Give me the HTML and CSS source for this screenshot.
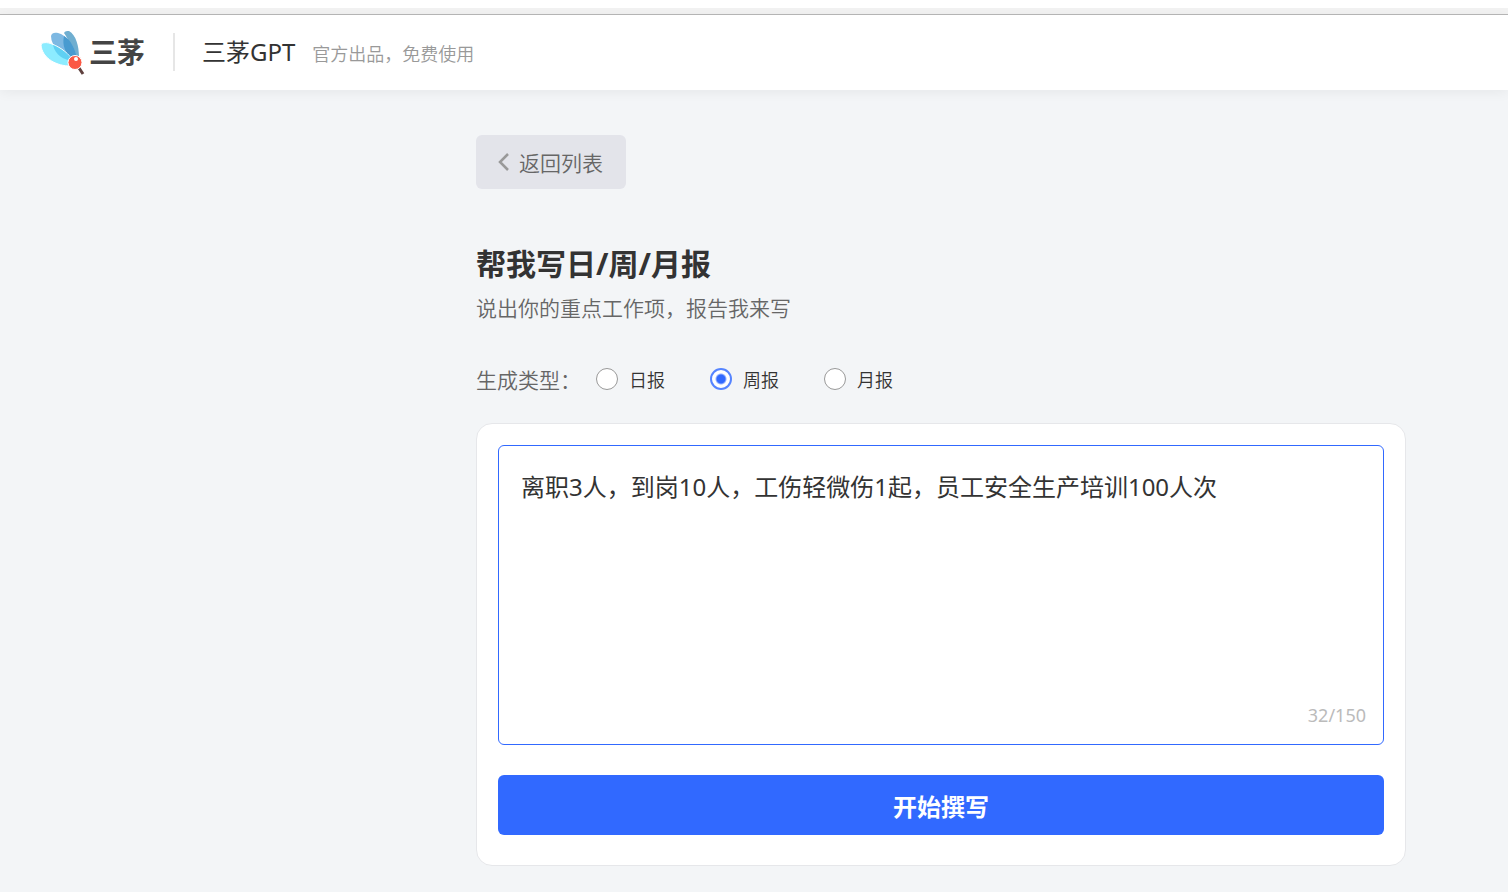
FILE: index.html
```html
<!DOCTYPE html>
<html lang="zh-CN">
<head>
<meta charset="utf-8">
<meta name="viewport" content="width=device-width, initial-scale=1">
<title>三茅GPT</title>
<link rel="stylesheet" href="styles.css">
</head>
<body>
<div class="top-strip"></div>
<header class="header">
  <a class="logo" href="#">
    <svg class="logo-mark" viewBox="0 0 48 48" aria-hidden="true">
      <path d="M24 5C25 3 27 3 29 3C36 7 39 18 39 29L34 29C32 18 28 11 24 5Z" fill="#6faed0"/>
      <path d="M11 8C12 4 16 4 21 6C30 11 35 20 37 30L31 32C22 26 11 19 11 8Z" fill="#7db8e2"/>
      <path d="M24 8C31 12 35 21 37 30L31 31C25 24 22 17 24 8Z" fill="#489bd0"/>
      <path d="M1 17C2 14 7 14 12 16C22 20 29 26 33 33L28 38C14 37 2 29 1 17Z" fill="#8cecff" stroke="#fff" stroke-width="1"/>
      <path d="M13 17C22 21 29 26 33 33C24 32 15 27 13 17Z" fill="#5fd0f3"/>
      <path d="M37 37L43 46" stroke="#5f403e" stroke-width="3"/>
      <circle cx="35" cy="34.500" r="7" fill="#fb5844" stroke="#fff" stroke-width="1"/>
      <circle cx="36" cy="31" r="2" fill="#fff"/>
    </svg>
    <span class="logo-text">三茅</span>
  </a>
  <span class="divider"></span>
  <span class="product">三茅GPT</span>
  <span class="slogan">官方出品，免费使用</span>
</header>
<main class="main">
  <button class="back" type="button">
    <svg class="back-icon" viewBox="0 0 12 20" aria-hidden="true"><path d="M10 1L2 9L10 17" fill="none" stroke="#999" stroke-width="2.5"/></svg>
    <span>返回列表</span>
  </button>
  <h1 class="title">帮我写日/周/月报</h1>
  <p class="subtitle">说出你的重点工作项，报告我来写</p>
  <form class="form">
    <div class="types" role="radiogroup" aria-labelledby="type-label">
      <span class="types-label" id="type-label">生成类型：</span>
      <label class="type"><input class="radio" type="radio" name="type">日报</label>
      <label class="type"><input class="radio" type="radio" name="type" checked>周报</label>
      <label class="type"><input class="radio" type="radio" name="type">月报</label>
    </div>
    <div class="card">
      <div class="field">
        <textarea class="input" maxlength="150" aria-label="重点工作项">离职3人，到岗10人，工伤轻微伤1起，员工安全生产培训100人次</textarea>
        <span class="counter">32/150</span>
      </div>
      <button class="submit" type="button">开始撰写</button>
    </div>
  </form>
</main>
</body>
</html>
```
FILE: styles.css
```css
* {
  box-sizing: border-box;
}

body {
  margin: 0;
  background: #f3f5f7;
  color: #333;
  font-family: "Noto Sans", "Noto Sans CJK SC", sans-serif;
}

button,
textarea {
  font-family: inherit;
}

.top-strip {
  height: 15px;
  border-top: 8px solid #fff;
  border-bottom: 1px solid #b8b8b8;
  background: #f2f2f2;
}

.header {
  display: flex;
  align-items: center;
  height: 75px;
  padding: 0 40px 2px;
  background: #fff;
  box-shadow: 0 2px 12px rgba(0, 0, 0, 0.06);
}

.logo {
  display: flex;
  align-items: center;
  gap: 1px;
  color: #444;
  text-decoration: none;
}

.logo-mark {
  width: 48px;
  height: 48px;
}

.logo-text {
  font-size: 28px;
  line-height: 40px;
  font-weight: 700;
}

.divider {
  width: 2px;
  height: 38px;
  margin: 0 27px 0 28px;
  background: #e6e6e6;
}

.product {
  font-size: 24px;
  line-height: 36px;
}

.slogan {
  margin: 4px 0 0 17px;
  color: #999;
  font-size: 18px;
  line-height: 28px;
  font-weight: 350;
}

.main {
  padding: 45px 102px 26px 476px;
}

.back {
  display: flex;
  align-items: center;
  gap: 9px;
  height: 54px;
  padding: 2px 23px 0 22px;
  border: 0;
  border-radius: 6px;
  background: #e3e4ea;
  color: #666;
  font-size: 21px;
  line-height: 32px;
  font-weight: 350;
}

.back-icon {
  width: 12px;
  height: 20px;
}

.title {
  margin: 53px 0 0;
  font-size: 30px;
  line-height: 44px;
  font-weight: 700;
}

.subtitle {
  margin: 6px 0 0;
  color: #666;
  font-size: 21px;
  line-height: 32px;
  font-weight: 350;
}

.types {
  display: flex;
  align-items: center;
  height: 32px;
  margin: 39px 0 28px;
}

.types-label {
  width: 120px;
  color: #666;
  font-size: 21px;
  font-weight: 350;
}

.type {
  display: flex;
  align-items: center;
  gap: 11px;
  margin-right: 45px;
  font-size: 18px;
  font-weight: 350;
}

.radio {
  appearance: none;
  width: 22px;
  height: 22px;
  margin: 0;
  border: 1px solid #999;
  border-radius: 50%;
  background: #fff;
}

.radio:checked {
  border: 2px solid #5584ff;
  background: radial-gradient(circle, #3169ff 4px, #fff 6px);
}

.card {
  padding: 21px 21px 30px;
  border: 1px solid #e6e7ea;
  border-radius: 16px;
  background: #fff;
}

.field {
  position: relative;
}

.input {
  display: block;
  width: 100%;
  height: 300px;
  padding: 23px 22px;
  border: 1px solid #3169ff;
  border-radius: 6px;
  outline: 0;
  resize: none;
  background: #fff;
  color: #333;
  font-size: 24px;
  line-height: 36px;
}

.counter {
  position: absolute;
  right: 18px;
  bottom: 16px;
  color: #bbb;
  font-size: 18px;
  line-height: 28px;
}

.submit {
  display: block;
  width: 100%;
  height: 60px;
  margin-top: 30px;
  border: 0;
  border-radius: 6px;
  background: #3169ff;
  color: #fff;
  font-size: 24px;
  font-weight: 700;
}
```
